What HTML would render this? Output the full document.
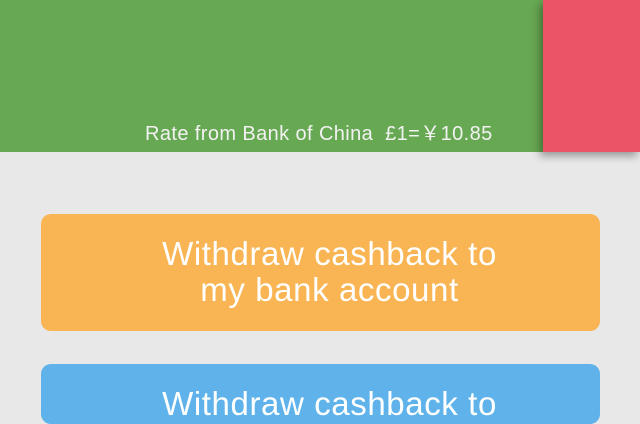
<!DOCTYPE html>
<html><head><style>
body{margin:0;width:640px;height:400px;overflow:hidden;background:#e8e8e8;font-family:"Liberation Sans","Noto Sans CJK SC",sans-serif;position:relative}
.g{position:absolute;left:0;top:0;width:640px;height:152px;background:#67a853}
.r{position:absolute;left:543px;top:0;width:97px;height:152px;background:#eb5466;box-shadow:-3px 4px 8px rgba(0,0,0,.35)}
.rate{position:absolute;left:145px;top:117px;color:#f2f2f2;font-size:20px;letter-spacing:0.4px;white-space:nowrap}
.b{position:absolute;left:41px;width:559px;border-radius:10px;color:#fff;font-size:33px;letter-spacing:0.6px;text-align:center;line-height:36px;box-sizing:border-box;padding-left:18px}
</style></head><body>
<div class="g"></div>
<div class="r"></div>
<div class="rate">Rate from Bank of China &nbsp;£1=￥10.85</div>
<div class="b" style="top:214px;height:117px;background:#f9b553"><div style="padding-top:22px">Withdraw cashback to<br>my bank account</div></div>
<div class="b" style="top:364px;height:60px;background:#5fb3ea"><div style="padding-top:22px">Withdraw cashback to</div></div>
</body></html>
